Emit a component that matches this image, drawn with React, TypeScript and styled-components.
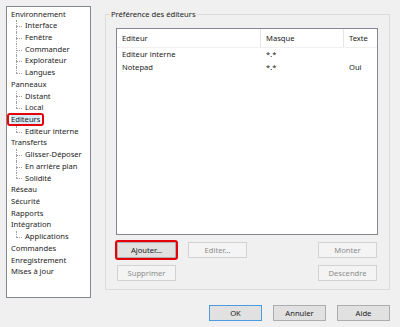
import React from 'react';
import styled, { createGlobalStyle } from 'styled-components';

const GlobalStyle = createGlobalStyle`
  body {
    margin: 0;
    background: #f0f0f0;
    font-family: "Noto Sans", "Liberation Sans", sans-serif;
    font-size: 7.6px;
    color: #1b1b1b;
  }
`;

const Page = styled.div`
  width: 400px;
  height: 327px;
  box-sizing: border-box;
  padding: 6px 0 0 6px;
  display: flex;
  gap: 14px;
  background: #f0f0f0;
`;

const Tree = styled.div`
  width: 85px;
  height: 292px;
  box-sizing: border-box;
  border: 1px solid #828790;
  background: #ffffff;
  padding-top: 1.5px;
`;

const TreeRow = styled.div<{ $child?: boolean; $last?: boolean }>`
  position: relative;
  height: 11.73px;
  line-height: 11.73px;
  padding-left: ${(p) => (p.$child ? '18px' : '4px')};
  white-space: nowrap;

  ${(p) =>
    p.$child &&
    `
    &::before {
      content: '';
      position: absolute;
      left: 9px;
      top: 0;
      height: ${p.$last ? '50%' : '100%'};
      border-left: 1px dotted #a0a0a0;
    }
    &::after {
      content: '';
      position: absolute;
      left: 9px;
      top: 50%;
      width: 6px;
      border-top: 1px dotted #a0a0a0;
    }
  `}
`;

const Highlight = styled.span`
  position: relative;
  background: #d9ebf9;

  &::after {
    content: '';
    position: absolute;
    left: -4px;
    right: -4px;
    top: -1px;
    bottom: -2px;
    border: 2px solid #e5000a;
    border-radius: 3px;
  }
`;

const Right = styled.div`
  width: 285px;
  display: flex;
  flex-direction: column;
`;

const GroupBox = styled.div`
  position: relative;
  margin-top: 8px;
  height: 276px;
  box-sizing: border-box;
  border: 1px solid #dcdcdc;
  padding: 13px 11px 0 10px;
`;

const GroupTitle = styled.span`
  position: absolute;
  top: -7px;
  left: 4px;
  padding: 0 1px;
  line-height: 12px;
  background: #f0f0f0;
`;

const List = styled.div`
  height: 207px;
  box-sizing: border-box;
  border: 1px solid #828790;
  background: #ffffff;
`;

const Cols = styled.div<{ $header?: boolean }>`
  display: grid;
  grid-template-columns: 144px 83px 1fr;
  height: ${(p) => (p.$header ? '18px' : '13px')};
  line-height: ${(p) => (p.$header ? '18px' : '13px')};
  border-bottom: ${(p) => (p.$header ? '1px solid #f0f0f0' : 'none')};
`;

const Cell = styled.div<{ $divider?: boolean }>`
  padding-left: 5px;
  white-space: nowrap;
  border-right: ${(p) => (p.$divider ? '1px solid #e5e5e5' : 'none')};
`;

const ButtonGrid = styled.div`
  margin-top: 7px;
  padding: 0 1px;
  display: grid;
  grid-template-columns: 59px 59px 1fr 59px;
  column-gap: 12px;
  row-gap: 7px;
`;

const Button = styled.button<{ $disabled?: boolean; $default?: boolean; $marked?: boolean; $col?: number }>`
  position: relative;
  height: 16px;
  padding: 0;
  font: inherit;
  grid-column: ${(p) => p.$col ?? 'auto'};
  background: ${(p) => (p.$disabled ? '#f4f4f4' : '#e1e1e1')};
  color: ${(p) => (p.$disabled ? '#8d8d8d' : '#1b1b1b')};
  border: 1px solid
    ${(p) => (p.$default ? '#4c9be0' : p.$disabled ? '#d2d2d2' : '#adadad')};

  ${(p) =>
    p.$marked &&
    `
    &::after {
      content: '';
      position: absolute;
      inset: -3px;
      border: 2px solid #e5000a;
      border-radius: 3px;
    }
  `}
`;

const Footer = styled.div`
  margin-top: 15px;
  display: flex;
  justify-content: flex-end;
  gap: 11px;

  & > button {
    width: 53px;
  }
`;

type Node = { label: string; children?: string[]; selected?: boolean };

const tree: Node[] = [
  { label: 'Environnement', children: ['Interface', 'Fenêtre', 'Commander', 'Explorateur', 'Langues'] },
  { label: 'Panneaux', children: ['Distant', 'Local'] },
  { label: 'Editeurs', children: ['Editeur interne'], selected: true },
  { label: 'Transferts', children: ['Glisser-Déposer', 'En arrière plan', 'Solidité'] },
  { label: 'Réseau' },
  { label: 'Sécurité' },
  { label: 'Rapports' },
  { label: 'Intégration', children: ['Applications'] },
  { label: 'Commandes' },
  { label: 'Enregistrement' },
  { label: 'Mises à jour' },
];

const editors = [
  { name: 'Editeur interne', mask: '*.*', text: '' },
  { name: 'Notepad', mask: '*.*', text: 'Oui' },
];

export default function App() {
  return (
    <>
      <GlobalStyle />
      <Page>
        <Tree>
          {tree.map((node) => (
            <React.Fragment key={node.label}>
              <TreeRow>
                {node.selected ? <Highlight>{node.label}</Highlight> : node.label}
              </TreeRow>
              {node.children?.map((child, i) => (
                <TreeRow key={child} $child $last={i === node.children!.length - 1}>
                  {child}
                </TreeRow>
              ))}
            </React.Fragment>
          ))}
        </Tree>

        <Right>
          <GroupBox>
            <GroupTitle>Préférence des éditeurs</GroupTitle>
            <List>
              <Cols $header>
                <Cell $divider>Editeur</Cell>
                <Cell $divider>Masque</Cell>
                <Cell>Texte</Cell>
              </Cols>
              {editors.map((e) => (
                <Cols key={e.name}>
                  <Cell>{e.name}</Cell>
                  <Cell>{e.mask}</Cell>
                  <Cell>{e.text}</Cell>
                </Cols>
              ))}
            </List>
            <ButtonGrid>
              <Button $marked>Ajouter…</Button>
              <Button $disabled>Editer…</Button>
              <Button $disabled $col={4}>Monter</Button>
              <Button $disabled>Supprimer</Button>
              <Button $disabled $col={4}>Descendre</Button>
            </ButtonGrid>
          </GroupBox>
          <Footer>
            <Button $default>OK</Button>
            <Button>Annuler</Button>
            <Button>Aide</Button>
          </Footer>
        </Right>
      </Page>
    </>
  );
}
